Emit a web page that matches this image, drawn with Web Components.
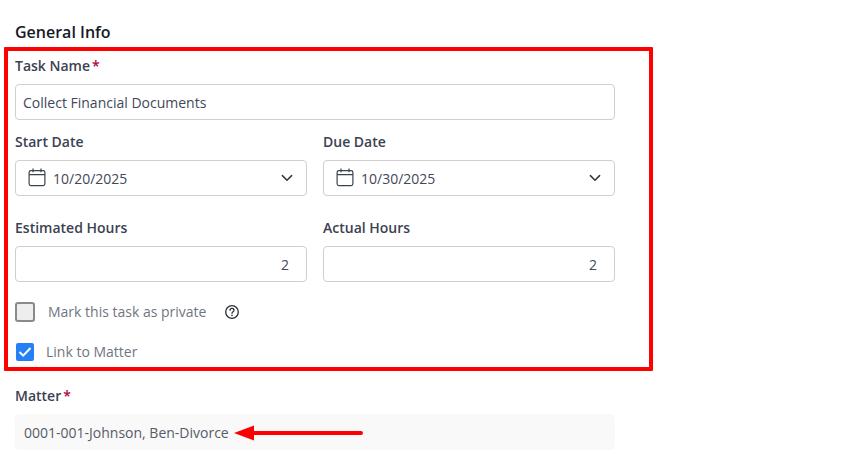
<!DOCTYPE html>
<html><head><meta charset="utf-8">
<style>
html,body{margin:0;padding:0;background:#fff;height:467px;overflow:hidden}
body{font-family:"Open Sans","Noto Sans",sans-serif}
</style></head><body>
<task-form></task-form>
<script>
const CAL='<svg width="18" height="19" viewBox="0 0 18 19" fill="none" stroke="#3c4350" stroke-width="1.2"><rect x="1.100" y="2.600" width="15.800" height="15" rx="1.800"/><path d="M1.100 6.600h15.800M5 .4v3.800M13 .4v3.800"/></svg>';
const CHEV='<svg width="12" height="8" viewBox="0 0 12 8" fill="none" stroke="#2f3542" stroke-width="1.5" stroke-linecap="round" stroke-linejoin="round"><path d="M1.400 1.600 6 6.200l4.600-4.600"/></svg>';
function def(name,css,html,init){
  customElements.define(name,class extends HTMLElement{
    constructor(){super();const r=this.attachShadow({mode:'open'});r.innerHTML='<style>'+css+'</style>'+html;if(init)init.call(this,r)}
  });
}
def('field-label',`:host{display:flex;align-items:center;height:20px;font-size:14px;font-weight:600;color:#3b4252;line-height:20px}
 i{font-style:normal;color:#b5003c;margin-left:2px;font-weight:600}`,
 '<slot></slot><i hidden>*</i>',function(r){ if(this.hasAttribute('required')) r.querySelector('i').hidden=false; });
def('text-box',`:host{display:flex;align-items:center;box-sizing:border-box;height:36px;border:1px solid #cfcfcf;border-radius:4px;padding:0 7px;font-size:14px;color:#414858;background:#fff}`,'<slot></slot>');
def('date-box',`:host{display:flex;align-items:center;box-sizing:border-box;height:36px;border:1px solid #cfcfcf;border-radius:4px;padding:0 13px 0 12px;font-size:14px;color:#414858;background:#fff}
 .c{display:flex;margin-right:7px;margin-top:-1px} .t{flex:1} .d{display:flex}`,
 '<span class="c">'+CAL+'</span><span class="t"><slot></slot></span><span class="d">'+CHEV+'</span>');
def('num-box',`:host{display:flex;align-items:center;justify-content:flex-end;box-sizing:border-box;height:36px;border:1px solid #cfcfcf;border-radius:4px;padding:0 17px;font-size:14px;color:#414858;background:#fff}`,'<slot></slot>');
def('task-form',`:host{display:block;position:relative;width:849px;height:467px;box-sizing:border-box;padding:21px 0 0 15px;color:#3b4252}
 h2{margin:0;font-size:16px;font-weight:600;line-height:22px;color:#16191f}
 .col{width:600px}
 .row{display:grid;grid-template-columns:292px 292px;gap:16px}
 .l1{margin-top:13px}.b1{margin-top:8px}
 .l2{margin-top:12px}.b2{margin-top:8px}
 .l3{margin-top:22px}
 .priv{display:flex;align-items:center;height:20px;margin-top:20px;font-size:14px;color:#6f7682}
 .txt{padding-bottom:2px}
 .box{box-sizing:border-box;width:20px;height:20px;border:2px solid #8a8a8a;border-radius:3px;background:#eeeeee;margin-right:13px}
 .q{display:flex;margin-left:18px}
 .link{display:flex;align-items:center;height:20px;margin-top:20px;font-size:14px;color:#6f7682}
 .chk{width:18px;height:18px;border-radius:2px;background:#2680f5;margin:0 12px 0 1px;display:flex;align-items:center;justify-content:center}
 .l4{margin-top:24px}
 .ro{display:flex;align-items:center;box-sizing:border-box;height:36px;margin-top:8px;background:#f9f9f9;border-radius:4px;padding:0 9px;font-size:14px;color:#555c68}
 .frame{position:absolute;left:4px;top:47px;width:649px;height:324px;box-sizing:border-box;border:4px solid #ff0000;border-radius:1px;pointer-events:none}
 .arrow{position:absolute;left:234px;top:424px}`,
`<h2>General Info</h2>
<div class="col">
 <field-label class="l1" required>Task Name</field-label>
 <text-box class="b1">Collect Financial Documents</text-box>
 <div class="row l2">
  <div><field-label>Start Date</field-label><date-box class="b2">10/20/2025</date-box></div>
  <div><field-label>Due Date</field-label><date-box class="b2">10/30/2025</date-box></div>
 </div>
 <div class="row l3">
  <div><field-label>Estimated Hours</field-label><num-box class="b2">2</num-box></div>
  <div><field-label>Actual Hours</field-label><num-box class="b2">2</num-box></div>
 </div>
 <div class="priv"><span class="box"></span><span class="txt">Mark this task as private</span>
  <span class="q"><svg width="16" height="16" viewBox="0 0 16 16" fill="none" stroke="#2b2f38" stroke-width="1.300"><circle cx="8" cy="8" r="6.300"/><path d="M6 6.300c0-1.200.9-1.900 2-1.900s2 .7 2 1.800c0 1.500-2 1.500-2 3" stroke-linecap="round"/><circle cx="8" cy="11.400" r=".8" fill="#2b2f38" stroke="none"/></svg></span></div>
 <div class="link"><span class="chk"><svg width="14" height="12" viewBox="0 0 14 12" fill="none" stroke="#fff" stroke-width="2"><path d="M1.500 6 5.200 9.600 12.500 2"/></svg></span><span class="txt">Link to Matter</span></div>
 <field-label class="l4" required>Matter</field-label>
 <div class="ro">0001-001-Johnson, Ben-Divorce</div>
</div>
<div class="frame"></div>
<svg class="arrow" width="130" height="18" viewBox="0 0 130 18"><path d="M0 9 20 1.500V7H127a2 2 0 0 1 0 4H20v5.500Z" fill="#ff0000"/></svg>`);
</script>
</body></html>
